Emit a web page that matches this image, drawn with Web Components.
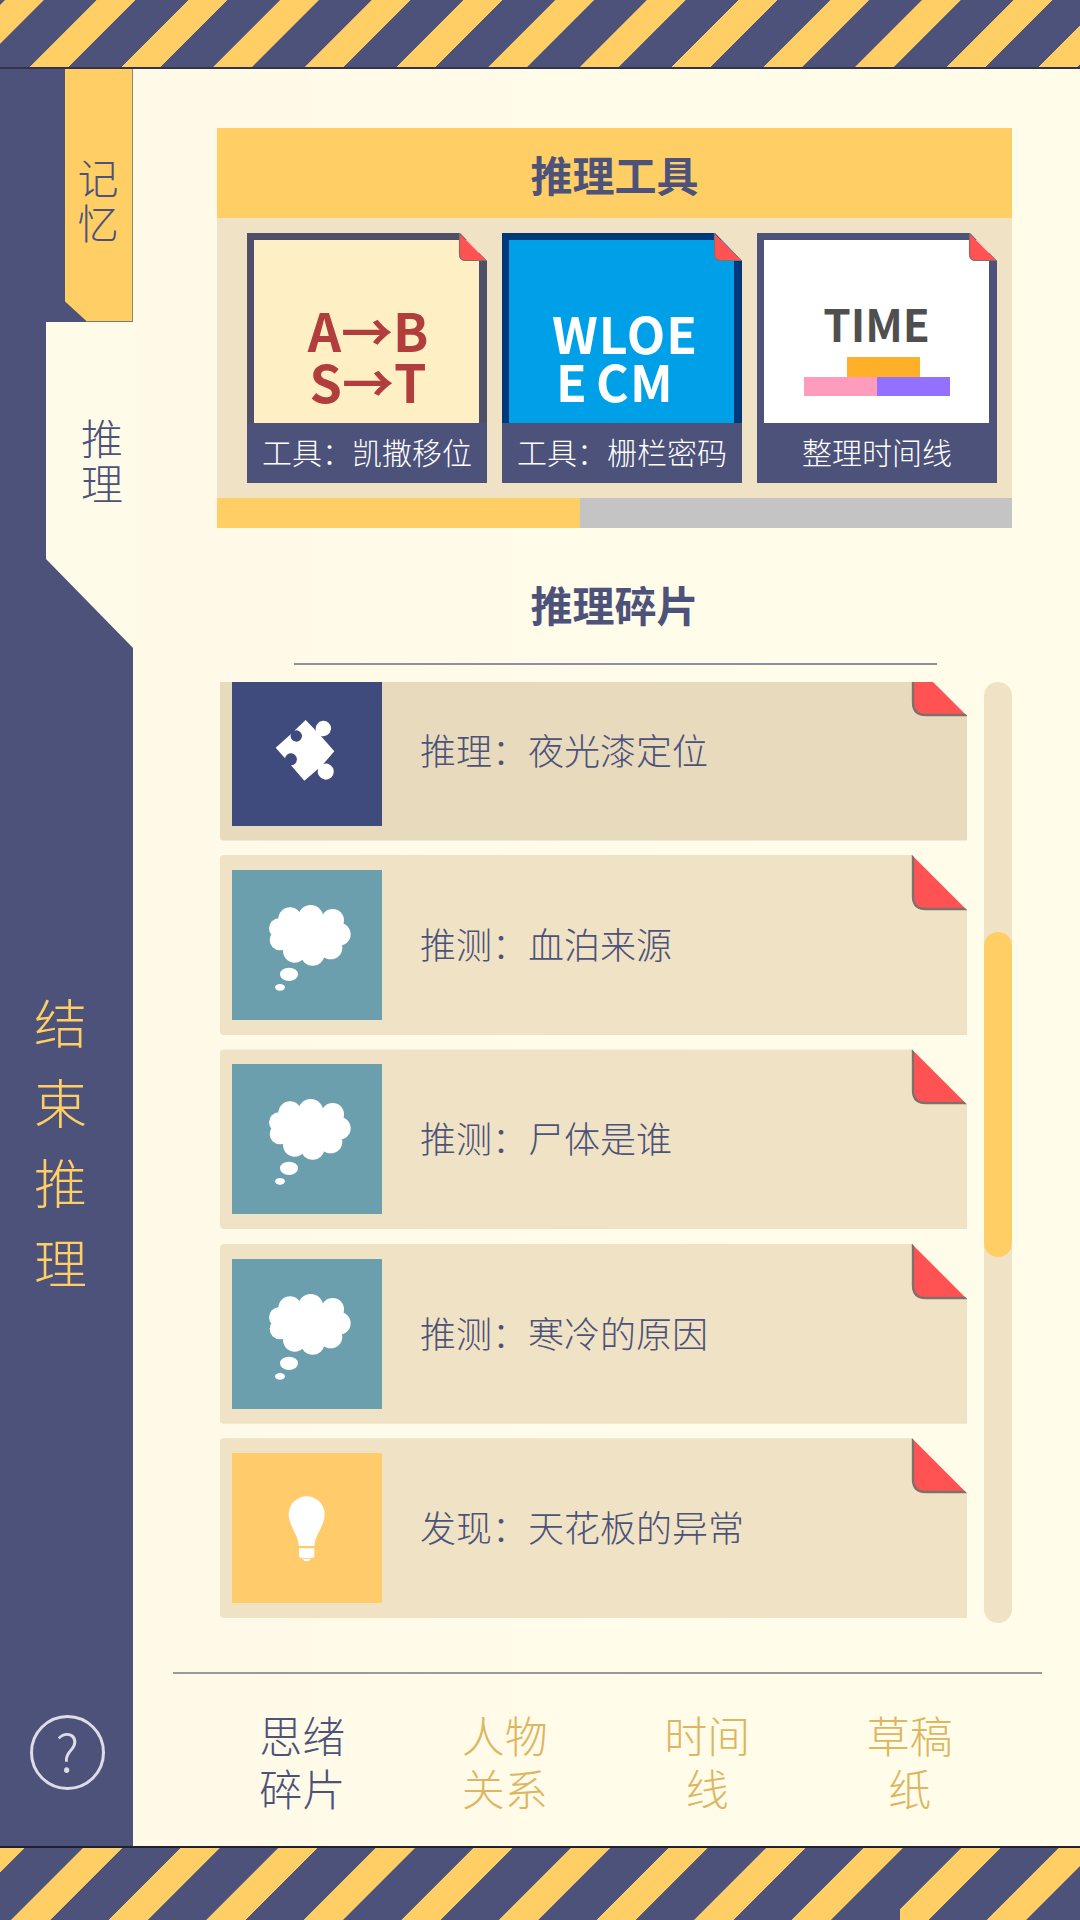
<!DOCTYPE html>
<html lang="zh-CN">
<head>
<meta charset="utf-8">
<title>推理</title>
<style>
  html,body{margin:0;padding:0;background:#fffbe9;}
  body{width:1080px;height:1920px;overflow:hidden;font-family:"Noto Sans CJK SC","Noto Sans",sans-serif;color:#4c5279;}
</style>
</head>
<body>
<app-shell>
  <hazard-stripes slot="top" variant="top"></hazard-stripes>
  <side-rail slot="rail">
    <memory-tab>记忆</memory-tab>
    <reason-tab>推理</reason-tab>
    <finish-button>结束推理</finish-button>
    <help-button>?</help-button>
  </side-rail>
  <main-pane slot="main">
    <tools-panel>
      <span slot="title">推理工具</span>
      <tool-card style="--frame:#504f68" label="工具：凯撒移位">
        <caesar-thumb>A→B<br>S→T</caesar-thumb>
      </tool-card>
      <tool-card style="--frame:#00397a" label="工具：栅栏密码">
        <fence-thumb><span>WLOE</span><span class="b">E CM</span></fence-thumb>
      </tool-card>
      <tool-card style="--frame:#4c5279" label="整理时间线">
        <time-thumb>TIME</time-thumb>
      </tool-card>
    </tools-panel>
    <section-title>推理碎片</section-title>
    <clue-scroller>
      <clue-item shade="#e8dabd" tone="#3f4a7d" text="推理：夜光漆定位">
        <svg slot="icon" viewBox="-99 -88 450 450" width="150" height="150"><path fill="#fff" d="M122 44L153 76A23 23 0 1 1 167 91L208 138L175 176A24 24 0 1 1 160 190L118 226L78 180A18 18 0 1 0 60 159L32 127L78 86A17 17 0 1 0 88 76Z"/></svg>
      </clue-item>
      <clue-item tone="#6b9fae" text="推测：血泊来源"><thought-icon slot="icon"></thought-icon></clue-item>
      <clue-item tone="#6b9fae" text="推测：尸体是谁"><thought-icon slot="icon"></thought-icon></clue-item>
      <clue-item tone="#6b9fae" text="推测：寒冷的原因"><thought-icon slot="icon"></thought-icon></clue-item>
      <clue-item tone="#ffcb6b" text="发现：天花板的异常"><bulb-icon slot="icon"></bulb-icon></clue-item>
    </clue-scroller>
    <mode-tabs>
      <mode-tab active>思绪<br>碎片</mode-tab>
      <mode-tab>人物<br>关系</mode-tab>
      <mode-tab>时间<br>线</mode-tab>
      <mode-tab>草稿<br>纸</mode-tab>
    </mode-tabs>
  </main-pane>
  <hazard-stripes slot="bottom" variant="bottom"></hazard-stripes>
</app-shell>

<script>
function def(name, html){
  customElements.define(name, class extends HTMLElement{
    constructor(){
      super();
      const root=this.attachShadow({mode:'open'});
      root.innerHTML=typeof html==='function'?html(this):html;
    }
  });
}

def('app-shell',`<style>
  :host{display:grid;grid-template-rows:69px 1777px 74px;width:1080px;height:1920px;background:#fffbe9;}
  .mid{display:flex;min-height:0;}
</style>
<slot name="top"></slot>
<div class="mid"><slot name="rail"></slot><slot name="main"></slot></div>
<slot name="bottom"></slot>`);

def('hazard-stripes',`<style>
  :host{display:block;position:relative;box-sizing:border-box;overflow:hidden;background-color:#4c5279;}
  :host([variant=top]){height:69px;border-bottom:2px solid #33344a;
    background-image:repeating-linear-gradient(135deg,
      #4c5279 0,#4c5279 3.3px,#ffcf66 3.8px,#ffcf66 30.8px,#4c5279 31.3px,#4c5279 64.84px);}
  :host([variant=bottom]){height:74px;border-top:2px solid #20212e;
    background-image:repeating-linear-gradient(135deg,
      #ffcf66 0,#ffcf66 17.2px,#4c5279 17.7px,#4c5279 58.4px,#ffcf66 58.9px,#ffcf66 69px);}
  .patch{display:none;position:absolute;left:885px;top:57px;width:15px;height:15px;background:#4c5279;clip-path:polygon(100% 0,100% 100%,0 100%);}
  :host([variant=bottom]) .patch{display:block;}
</style><i class="patch"></i>`);

def('side-rail',`<style>
  :host{display:flex;flex-direction:column;width:133px;flex:none;background:#4c5279;height:1777px;}
</style><slot></slot>`);

def('memory-tab',`<style>
  :host{display:block;box-sizing:border-box;margin-left:64.5px;width:68px;height:253px;padding-top:85px;
    background:#ffcf66;border-right:1.5px solid #7d7a75;border-bottom:1.5px solid #7d7a75;
    clip-path:polygon(0 0,100% 0,100% 100%,23px 100%,0 232px);
    font-size:41px;line-height:45px;text-align:center;color:#4c5279;font-weight:300;}
  div{width:1em;margin:0 auto;word-break:break-all;}
</style><div><slot></slot></div>`);

def('reason-tab',`<style>
  :host{display:block;box-sizing:border-box;margin-left:46px;width:89px;height:328px;padding:92px 0 0 35px;
    background:#fffbe9;clip-path:polygon(0 0,100% 0,100% 100%,0 237px);
    font-size:42px;line-height:45px;color:#4c5279;font-weight:300;}
  div{width:1em;word-break:break-all;}
</style><div><slot></slot></div>`);

def('finish-button',`<style>
  :host{display:block;margin:331px 0 0 34px;width:53px;font-size:53px;line-height:80px;color:#ffcf66;font-weight:300;word-break:break-all;}
</style><slot></slot>`);

def('help-button',`<style>
  :host{display:flex;align-items:center;justify-content:center;box-sizing:border-box;margin:auto 0 56px 30px;width:75px;height:75px;padding-bottom:5px;
    border:3px solid #dcdde8;border-radius:50%;color:#dcdde8;font-size:52px;font-weight:300;line-height:1;}
</style><slot></slot>`);

def('main-pane',`<style>
  :host{display:block;flex:1;min-width:0;box-sizing:border-box;padding:59px 0 0 84px;background:linear-gradient(90deg,#fffaE8,#fffde9);}
</style><slot></slot>`);

def('tools-panel',`<style>
  :host{display:block;width:795px;}
  .head{height:90px;display:flex;align-items:center;justify-content:center;background:#ffcf66;color:#4c5279;font-size:42px;font-weight:700;}
  .body{height:280px;box-sizing:border-box;background:#f0e2c4;padding:15px 15px 15px 30px;display:flex;gap:15px;overflow:hidden;}
  .bar{height:29.5px;background:#c4c4c4;}
  .bar i{display:block;width:363px;height:100%;background:#ffcf66;}
</style>
<div class="head"><slot name="title"></slot></div>
<div class="body"><slot></slot></div>
<div class="bar"><i></i></div>`);

def('fold-corner',`<style>
  :host{display:block;position:absolute;top:0;right:0;width:var(--size,55px);height:var(--size,55px);}
  svg{display:block;width:100%;height:100%;overflow:visible;}
</style>
<svg viewBox="0 0 55 55"><path fill="#ff5353" d="M0 0L55 55H14Q0 55 0 41Z"/><path fill="none" stroke="#80706c" stroke-width="2.4" d="M1 0V41Q1 54 14 54H55"/></svg>`);

def('tool-card',el=>`<style>
  :host{display:block;position:relative;flex:none;width:240px;height:250px;background:var(--frame);
    clip-path:polygon(0 0,213px 0,100% 28px,100% 100%,0 100%);}
  .thumb{box-sizing:border-box;height:190px;padding:7px 8px 0 7px;}
  .inner{height:183px;overflow:hidden;}
  .cap{box-sizing:border-box;height:60px;padding-bottom:5px;display:flex;align-items:center;justify-content:center;background:#4c5279;color:#fff;font-size:30px;font-weight:300;white-space:nowrap;}
  fold-corner{--size:28px;}
</style>
<div class="thumb"><div class="inner"><slot></slot></div></div>
<div class="cap">${el.getAttribute('label')}</div>
<fold-corner></fold-corner>`);

def('caesar-thumb',`<style>
  :host{display:flex;flex-direction:column;justify-content:flex-end;box-sizing:border-box;height:183px;padding:0 0 17px 3px;
    background:#fef0c4;color:#b13d3d;font-size:52px;line-height:51px;font-weight:700;text-align:center;}
</style><div><slot></slot></div>`);

def('fence-thumb',`<style>
  :host{display:flex;flex-direction:column;justify-content:flex-end;box-sizing:border-box;height:183px;padding:0 0 19px 43px;
    background:#00a0e9;color:#fff;font-size:50px;line-height:48px;font-weight:700;letter-spacing:1px;}
  ::slotted(span){display:block;}
  ::slotted(.b){margin-left:4px;word-spacing:-4px;}
</style><slot></slot>`);

def('time-thumb',`<style>
  :host{display:flex;flex-direction:column;align-items:center;box-sizing:border-box;height:183px;padding-top:54px;background:#fff;color:#4f4f4f;font-size:44px;line-height:58px;font-weight:700;}
  .t{height:58px;}
  .bars{margin-top:5px;width:146px;}
  .top{width:73px;height:19.5px;margin-left:43.5px;background:#ffb028;}
  .row{display:flex;height:19px;}
  .row i{flex:1;}
</style>
<div class="t"><slot></slot></div>
<div class="bars"><div class="top"></div><div class="row"><i style="background:#ff9bbd"></i><i style="background:#9470ff"></i></div></div>`);

def('section-title',`<style>
  :host{display:block;box-sizing:border-box;width:795px;height:137px;padding-top:48px;text-align:center;color:#4c5279;font-size:42px;line-height:55px;font-weight:700;position:relative;}
  .line{position:absolute;left:77px;bottom:0;width:643px;height:2px;background:#8f8f9f;}
</style><slot></slot><div class="line"></div>`);

def('clue-scroller',`<style>
  :host{display:flex;gap:17px;margin:17px 0 0 3px;width:792px;height:941px;}
  .view{width:747px;height:940px;margin-top:.5px;overflow:hidden;}
  .list{display:flex;flex-direction:column;gap:14.4px;margin-top:-21.4px;}
  .track{width:28px;height:941px;border-radius:14px;background:#f0e2c4;overflow:hidden;}
  .thumb{margin-top:250px;height:325px;border-radius:14px;background:#ffcf66;}
</style>
<div class="view"><div class="list"><slot></slot></div></div>
<div class="track"><div class="thumb"></div></div>`);

def('clue-item',el=>`<style>
  :host{display:flex;align-items:center;position:relative;flex:none;box-sizing:border-box;width:747px;height:180px;padding:0 0 0 12px;gap:38px;
    background:var(--shade);border-radius:4px 0 0 4px;font-size:36px;color:#4c5279;font-weight:300;
    clip-path:polygon(0 0,692px 0,100% 55px,100% 100%,0 100%);--shade:${el.getAttribute('shade')||'#f0e2c4'};}
  .icon{flex:none;width:150px;height:150px;background:${el.getAttribute('tone')};}
  .txt{padding-bottom:4px;}
  ::slotted(*){display:block;}
</style>
<div class="icon"><slot name="icon"></slot></div>
<div class="txt">${el.getAttribute('text')}</div>
<fold-corner></fold-corner>`);

def('thought-icon',`<style>:host{display:block;width:150px;height:150px;}svg{display:block;}</style>
<svg viewBox="-114 -75 450 450" width="150" height="150" fill="#fff">
  <circle cx="60" cy="72" r="35"/><circle cx="122" cy="68" r="38"/><circle cx="188" cy="76" r="34"/>
  <circle cx="208" cy="118" r="34"/><circle cx="182" cy="158" r="35"/><circle cx="128" cy="176" r="36"/>
  <circle cx="74" cy="168" r="35"/><circle cx="30" cy="135" r="31"/><circle cx="27" cy="100" r="30"/>
  <ellipse cx="120" cy="120" rx="95" ry="62"/>
  <ellipse cx="57" cy="238" rx="27" ry="20"/><ellipse cx="30" cy="277" rx="15" ry="10"/>
</svg>`);

def('bulb-icon',`<style>:host{display:block;width:150px;height:150px;}svg{display:block;}</style>
<svg viewBox="-114 -96 450 450" width="150" height="150" fill="#fff">
  <path d="M87 183C85 150 56 122 56 88A54 54 0 0 1 164 88C164 122 135 150 133 183Z"/>
  <path d="M87 190H133V212Q133 219 124 219H96Q87 219 87 212Z"/>
  <path d="M97 221H123Q118 229 110 229Q102 229 97 221Z"/>
</svg>`);

def('mode-tabs',`<style>
  :host{display:block;margin:49px 0 0 -44px;width:869px;border-top:2px solid #9a9a9c;box-sizing:border-box;padding:34px 0 0 28px;}
  .row{display:grid;grid-template-columns:repeat(4,202.5px);}
</style><div class="row"><slot></slot></div>`);

def('mode-tab',`<style>
  :host{display:block;text-align:center;color:#dcb660;font-size:43px;line-height:53px;font-weight:300;}
  :host([active]){color:#4c5279;}
</style><slot></slot>`);
</script>
</body>
</html>
